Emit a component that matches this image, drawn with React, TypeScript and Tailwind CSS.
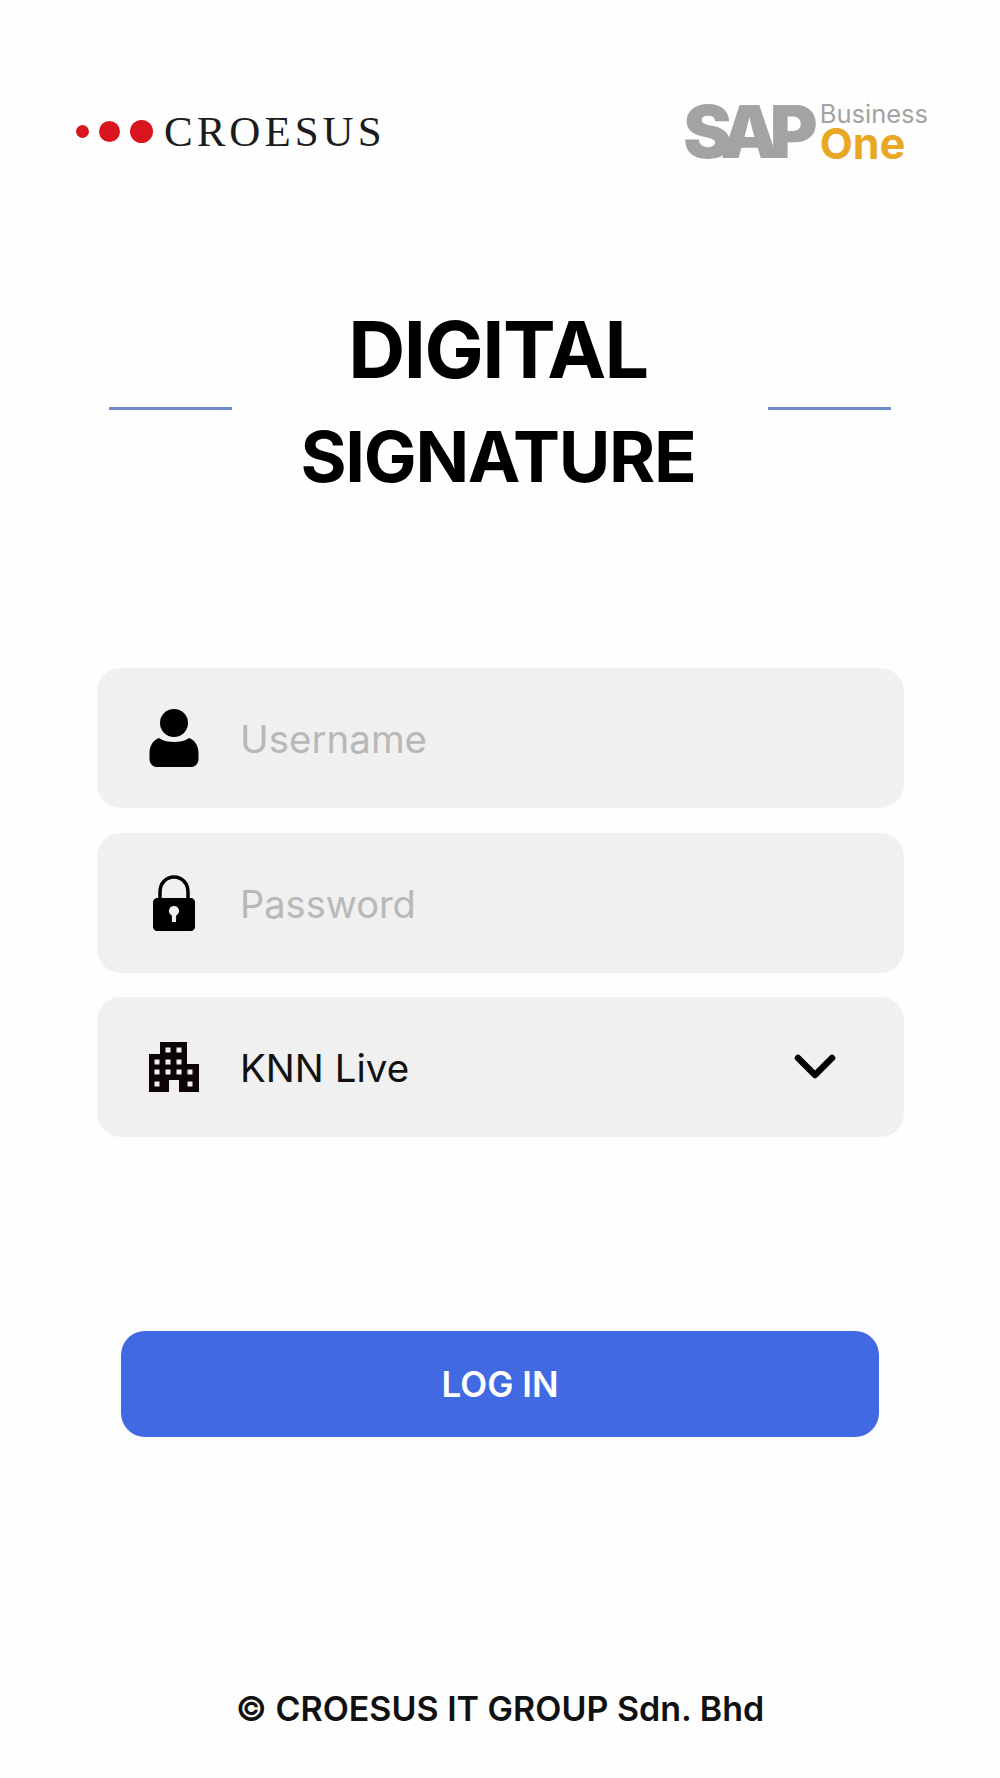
function UserIcon() {
  return (
    <svg width="50" height="58" viewBox="0 0 50 58" fill="#000">
      <circle cx="25" cy="14" r="14" />
      <path d="M10 29c4 3 10 4 15 4s11-1 15-4c6 2 9.500 8 9.500 15v6c0 5-3.500 8-7.500 8H8c-4 0-7.500-3-7.500-8v-6C.5 37 4 31 10 29z" />
    </svg>
  );
}

function LockIcon() {
  return (
    <svg width="42" height="56" viewBox="0 0 42 56" fill="none">
      <path d="M7 25V17C7 8.500 13 2 21 2s14 6.500 14 15v8" stroke="#000" strokeWidth="3.500" />
      <path
        fill="#000"
        fillRule="evenodd"
        d="M4 23h34c2 0 4 2 4 4v25c0 2-2 4-4 4H4c-2 0-4-2-4-4V27c0-2 2-4 4-4zm17 8a5 5 0 0 0-2.200 9.500L19 47h4l.2-6.500A5 5 0 0 0 21 31z"
      />
    </svg>
  );
}

function BuildingIcon() {
  const windows = [
    [19, 8], [30, 8],
    [8, 20], [19, 20], [30, 20],
    [8, 30], [19, 30], [30, 30], [41, 30],
    [8, 42], [41, 42],
  ];
  return (
    <svg width="50" height="50" viewBox="0 0 50 50">
      <path d="M11 0h27v22h12v28H30V38H20v12H0V12h11z" fill="#0c0406" />
      {windows.map(([x, y]) => (
        <rect key={`${x}-${y}`} x={x - 2.500} y={y - 2.500} width="5" height="5" fill="#f0f0f0" />
      ))}
    </svg>
  );
}

function Field({ icon, children }: { icon: React.ReactNode; children: React.ReactNode }) {
  return (
    <div className="flex h-[140px] items-center rounded-[24px] bg-[#f0f0f0] pr-[68px]">
      <div className="flex w-[143px] justify-center pl-[11px]">{icon}</div>
      {children}
    </div>
  );
}

export default function App() {
  return (
    <div className="flex h-[1778px] flex-col bg-[#fefefe] text-black [font-family:Inter,'Liberation_Sans',sans-serif]">
      <header className="mt-[99px] flex h-[64px] items-center justify-between pl-[76px] pr-[72px]">
        <div className="flex items-center">
          <span className="h-[13px] w-[13px] rounded-full bg-[#d9161f]" />
          <span className="ml-[10px] h-[21px] w-[21px] rounded-full bg-[#d9161f]" />
          <span className="ml-[10px] h-[23px] w-[23px] rounded-full bg-[#d9161f]" />
          <span className="ml-[11px] text-[43px] leading-none tracking-[4px] text-[#1c1c1c] [font-family:'Liberation_Serif',serif]">
            CROESUS
          </span>
        </div>
        <div className="flex items-center">
          <span className="pr-[3px] text-[73px] leading-none font-black tracking-[-9px] text-[#a3a3a3]">SAP</span>
          <div className="ml-[8px] flex flex-col">
            <span className="text-[25.500px] leading-[24px] text-[#a3a3a3]">Business</span>
            <span className="text-[43px] leading-[34px] font-bold text-[#e8a823]">One</span>
          </div>
        </div>
      </header>

      <div className="mt-[136px] flex items-center justify-between px-[109px]">
        <div className="h-[3px] w-[123px] bg-[#6d8ac9]" />
        <h1 className="pr-[4px] pb-[13px] text-center font-[650]">
          <div className="text-[79px] leading-[100px] tracking-[-1.500px]">DIGITAL</div>
          <div className="mt-[10px] text-[70.500px] leading-[96px] tracking-[-1.300px]">SIGNATURE</div>
        </h1>
        <div className="h-[3px] w-[123px] bg-[#6d8ac9]" />
      </div>

      <form className="mt-[150px] flex flex-col gap-[24.500px] pl-[97px] pr-[96px]">
        <Field icon={<UserIcon />}>
          <span className="mt-[3px] text-[38.500px] text-[#b8b8b8]">Username</span>
        </Field>
        <Field icon={<LockIcon />}>
          <span className="mt-[3px] text-[38px] text-[#b8b8b8]">Password</span>
        </Field>
        <Field icon={<BuildingIcon />}>
          <span className="mt-[3px] flex-1 text-[38.500px] text-[#111]">KNN Live</span>
          <svg width="42" height="26" viewBox="0 0 42 26" fill="none">
            <path d="M4 4l17 17L38 4" stroke="#000" strokeWidth="6.500" strokeLinecap="round" strokeLinejoin="round" />
          </svg>
        </Field>
      </form>

      <button className="mx-[121px] mt-[194px] h-[106px] rounded-[24px] bg-[#4169e1] text-[35px] font-semibold text-white">
        LOG IN
      </button>

      <footer className="mt-auto mb-[44px] text-center text-[34px] font-semibold text-[#111]">
        © CROESUS IT GROUP Sdn. Bhd
      </footer>
    </div>
  );
}
